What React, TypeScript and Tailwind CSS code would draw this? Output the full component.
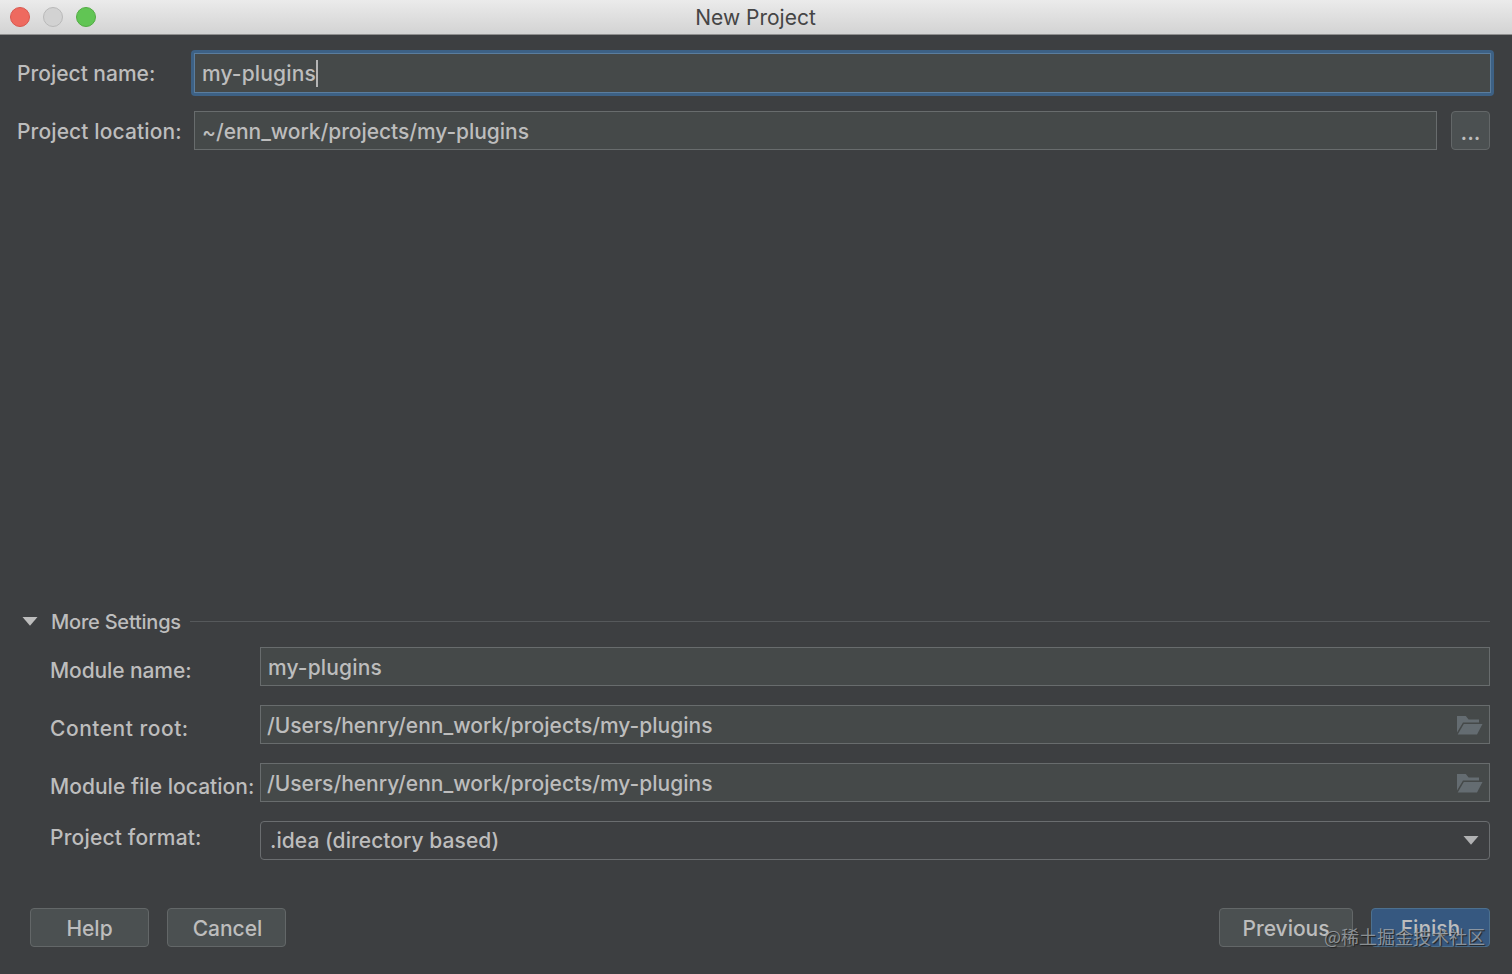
import { useState } from "react";

type PathFieldProps = {
  value: string;
  onChange: (value: string) => void;
};

const fieldClass =
  "h-[39px] min-w-0 flex-1 border border-[#686c6d] bg-[#454949] pt-[2px] pl-[7px] outline-none";
const buttonClass =
  "flex h-[39px] items-center justify-center rounded-[4px] border border-[#636768] bg-[#4b5051] pt-[2px]";

function FolderIcon() {
  return (
    <svg width="26" height="20" viewBox="0 0 26 20" fill="#646c71" className="mt-[3px] mr-[6px] shrink-0">
      <path d="M0 0H8.8L11.6 3.6H22V6.4H6L0 16.5Z" />
      <path d="M6.8 8H25.5L20 18.5H0.7Z" />
    </svg>
  );
}

function PathField({ value, onChange }: PathFieldProps) {
  return (
    <div className="flex h-[39px] flex-1 items-center border border-[#686c6d] bg-[#454949]">
      <input
        value={value}
        onChange={(e) => onChange(e.target.value)}
        className="h-full min-w-0 flex-1 bg-transparent pt-[2px] pl-[6px] outline-none"
      />
      <FolderIcon />
    </div>
  );
}

export default function App() {
  const [location, setLocation] = useState("~/enn_work/projects/my-plugins");
  const [moduleName, setModuleName] = useState("my-plugins");
  const [contentRoot, setContentRoot] = useState("/Users/henry/enn_work/projects/my-plugins");
  const [moduleFile, setModuleFile] = useState("/Users/henry/enn_work/projects/my-plugins");

  return (
    <main className="relative flex h-[974px] w-[1512px] flex-col overflow-hidden bg-[#3d3f41] font-['Inter',sans-serif] text-[21px] leading-[26px] font-[450] text-[#bdbdbd]">
      <header className="flex h-[35px] shrink-0 items-center border-b border-[#8f8f8f] bg-linear-to-b from-[#ebebeb] to-[#d3d3d3] pl-[10px]">
        <div className="flex w-[98px] gap-[13px] pb-[1px]">
          <span className="size-5 rounded-full border border-[#d9584f] bg-[#ee6a5f]" />
          <span className="size-5 rounded-full border border-[#b9b9b9] bg-[#d2d2d2]" />
          <span className="size-5 rounded-full border border-[#52ac43] bg-[#61c554]" />
        </div>
        <h1 className="flex-1 pt-[1px] pr-[109px] text-center font-normal text-[#454545]">New Project</h1>
      </header>

      <section className="pt-[15px] pr-[18px] pl-[17px]">
        <div className="flex items-center">
          <label className="w-[174px] pt-[2px]">Project name:</label>
          <div className="flex h-[46px] flex-1 rounded-[4px] bg-[#3d6185] p-[3px]">
            <div className="flex flex-1 items-center border border-[#5a7d9e] bg-[#454949] pl-[7px]">
              <span className="pt-[2px] tracking-[0.15px]">my-plugins</span>
              <span className="h-[27px] w-[2px] bg-[#b5b5b5]" />
            </div>
          </div>
        </div>
        <div className="mt-[15px] flex items-center pr-[4px]">
          <label className="w-[177px] pt-[2px] tracking-[0.12px]">Project location:</label>
          <input
            value={location}
            onChange={(e) => setLocation(e.target.value)}
            className={`${fieldClass} tracking-[-0.05px]`}
          />
          <button className={`${buttonClass} ml-[14px] w-[39px] text-[22px]`}>...</button>
        </div>
      </section>

      <section className="mt-auto pr-[22px] pl-[22px]">
        <div className="flex h-[26px] items-center">
          <svg width="16" height="9" viewBox="0 0 16 9" fill="#bdbdbd">
            <path d="M0.5 0H15.5L8 8.7Z" />
          </svg>
          <h2 className="ml-[13px] w-[139px] pt-[1px] text-[20px] tracking-[-0.22px]">More Settings</h2>
          <div className="h-px flex-1 bg-[#56595b]" />
        </div>

        <div className="mt-[13px] flex flex-col gap-[19px] pl-[28px]">
          <div className="flex items-center">
            <label className="w-[210px] pt-[8px] tracking-[-0.1px]">Module name:</label>
            <input
              value={moduleName}
              onChange={(e) => setModuleName(e.target.value)}
              className={`${fieldClass} tracking-[0.15px]`}
            />
          </div>
          <div className="flex items-center">
            <label className="w-[210px] pt-[8px] tracking-[0.52px]">Content root:</label>
            <PathField value={contentRoot} onChange={setContentRoot} />
          </div>
          <div className="flex items-center">
            <label className="w-[210px] pt-[8px] tracking-[0.04px] whitespace-nowrap">Module file location:</label>
            <PathField value={moduleFile} onChange={setModuleFile} />
          </div>
          <div className="flex items-center">
            <label className="w-[210px] pb-[5px] tracking-[0.18px]">Project format:</label>
            <button className="flex h-[39px] flex-1 items-center justify-between rounded-[4px] border border-[#6a6d6f] pr-[10px] pl-[9px]">
              <span className="tracking-[0.05px]">.idea (directory based)</span>
              <svg width="16" height="9" viewBox="0 0 16 9" fill="#b0b1b2">
                <path d="M0.5 0H15.5L8 8.7Z" />
              </svg>
            </button>
          </div>
        </div>
      </section>

      <footer className="mt-[48px] mb-[27px] flex pr-[22px] pl-[30px]">
        <button className={`${buttonClass} w-[119px]`}>Help</button>
        <button className={`${buttonClass} ml-[18px] w-[119px] pl-[2px]`}>Cancel</button>
        <button className={`${buttonClass} ml-auto w-[134px]`}>Previous</button>
        <button className="ml-[18px] flex h-[39px] w-[119px] items-center justify-center rounded-[4px] border border-[#4c708f] bg-[#365880] pt-[2px]">
          Finish
        </button>
      </footer>

      <div className="absolute right-[27px] bottom-[25px] font-['Noto_Sans_CJK_SC',sans-serif] text-[18px] font-normal text-[#a4a9ad]/80 [text-shadow:1px_1px_1px_#222]">
        @稀土掘金技术社区
      </div>
    </main>
  );
}
